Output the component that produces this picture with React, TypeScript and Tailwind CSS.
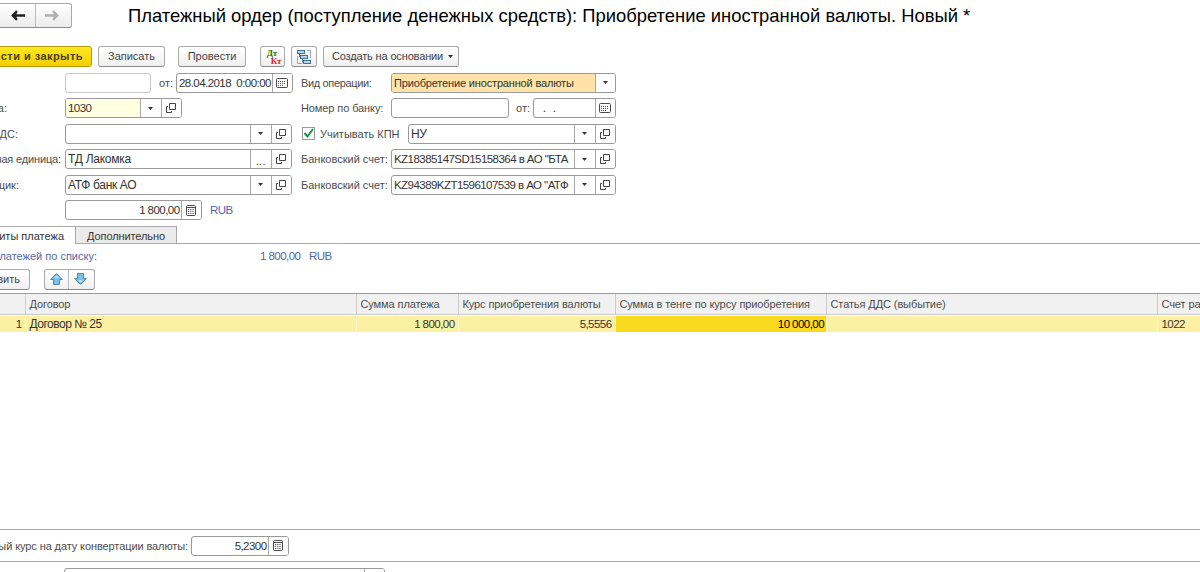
import type { ReactNode } from 'react';
import clsx from 'clsx';

const TABLE_COLUMNS = 'grid grid-cols-[26px_331px_102px_157px_211px_331px_minmax(0,1fr)]';
const VALUE_TEXT = 'text-[11.5px] tracking-[-0.55px]';

function Text({ className, children }: { className?: string; children: ReactNode }) {
  return <span className={clsx('block shrink-0 whitespace-pre', className)}>{children}</span>;
}

// Labels on the left edge run past the window, only their tail is visible
function CutLabel({ className, children }: { className: string; children: ReactNode }) {
  return (
    <span className="flex w-[65px] shrink-0">
      <span className={clsx('flex shrink-0 justify-end whitespace-pre', className)}>
        <span className="shrink-0">{children}</span>
      </span>
    </span>
  );
}

function DropIcon() {
  return (
    <svg width="5" height="3" viewBox="0 0 5 3" fill="#333">
      <path d="M0 0h5L2.5 3z" />
    </svg>
  );
}

function OpenIcon() {
  return (
    <svg width="10" height="10" viewBox="0 0 10 10" fill="none" stroke="#444">
      <path d="M3.5.5h6v6h-6z" />
      <path d="M2 3.5H.5v6h5V8" />
    </svg>
  );
}

function CalendarIcon() {
  return (
    <svg width="12" height="10" viewBox="0 0 12 10" fill="none" stroke="#4a4a4a">
      <rect x=".5" y=".5" width="11" height="9" rx="1" />
      <path d="M2 3.5h8M2 5.5h8M2 7.5h6" strokeDasharray="1 1" />
    </svg>
  );
}

function CalcIcon() {
  return (
    <svg width="10" height="11" viewBox="0 0 10 11" fill="none" stroke="#4a4a4a">
      <rect x=".5" y=".5" width="9" height="10" rx="1" />
      <path d="M1 2.5h8" />
      <path d="M2 4.5h6M2 6.5h6M2 8.5h6" strokeDasharray="1.2 1" />
    </svg>
  );
}

const icons = {
  drop: <DropIcon />,
  open: <OpenIcon />,
  calendar: <CalendarIcon />,
  calc: <CalcIcon />,
  dots: <span className="pt-1 text-[11px] leading-none tracking-[0.3px]">...</span>,
};

type FieldProps = {
  className: string;
  valueClass?: string;
  textClass?: string;
  buttons?: (keyof typeof icons)[];
  pale?: boolean;
  children?: ReactNode;
};

function Field({ className, valueClass, textClass = VALUE_TEXT, buttons = [], pale, children }: FieldProps) {
  return (
    <div
      className={clsx(
        'flex h-5 shrink-0 overflow-hidden rounded-[3px] border bg-white text-[#333]',
        pale ? 'border-[#c8c8c8]' : 'border-[#999]',
        className,
      )}
    >
      <div className={clsx('flex min-w-0 flex-1 items-center overflow-hidden whitespace-pre pl-[2px]', textClass, valueClass)}>
        {children}
      </div>
      {buttons.map((name) => (
        <div key={name} className="flex w-[20.5px] shrink-0 items-center justify-center border-l border-[#a8a8a8] bg-white">
          {icons[name]}
        </div>
      ))}
    </div>
  );
}

function Button({ className, children }: { className: string; children: ReactNode }) {
  return (
    <button
      className={clsx(
        'flex h-[21px] shrink-0 items-center justify-center rounded-[3px] border border-[#aaa] border-b-[#8c8c8c] bg-linear-to-b from-white to-[#f0f0f0] whitespace-pre text-[#444]',
        className,
      )}
    >
      {children}
    </button>
  );
}

function Arrow({ up }: { up?: boolean }) {
  return (
    <svg width="13" height="12" viewBox="0 0 13 12" className={up ? '' : 'rotate-180'}>
      <path d="M6.5.6 12.3 6.5H9.5v4.9h-6V6.5H.7z" fill="#7dc0ea" stroke="#4d86ab" strokeLinejoin="round" />
      <path d="M6.5 2.3 9 5H4z" fill="#b9e2fa" />
    </svg>
  );
}

function NavArrow({ forward }: { forward?: boolean }) {
  return (
    <svg width="14" height="11" viewBox="0 0 14 11" fill="none" strokeWidth="2.4" stroke={forward ? '#b0b0b0' : '#222'} className={forward ? 'rotate-180' : ''}>
      <path d="M14 5.5H2M6 1.2 1.8 5.5 6 9.8" />
      <path d="M5 3.5v4L3 5.5z" strokeWidth="1" fill={forward ? '#b0b0b0' : '#222'} />
    </svg>
  );
}

function Header() {
  return (
    <div className="flex h-[46px] items-start pt-[3px]">
      <div className="-ml-1 flex h-[25px] w-[76px] shrink-0 rounded-[3px] border border-[#aaa] border-b-[#8c8c8c] bg-linear-to-b from-white to-[#ececec]">
        <div className="flex w-[39px] items-center justify-center border-r border-[#bbb] pl-1">
          <NavArrow />
        </div>
        <div className="flex flex-1 items-center justify-center pr-1">
          <NavArrow forward />
        </div>
      </div>
      <h1 className="ml-14 whitespace-pre text-[18.4px] leading-[25px] text-black">
        Платежный ордер (поступление денежных средств): Приобретение иностранной валюты. Новый *
      </h1>
    </div>
  );
}

function CommandBar() {
  return (
    <div className="flex h-[26.5px] items-start">
      <div className="-ml-1 flex h-[21px] w-24 shrink-0 items-center justify-end rounded-[3px] border border-[#b79c10] bg-linear-to-b from-[#ffe71e] to-[#f3cf00] pr-[8px] font-bold tracking-[0.45px] whitespace-pre text-[#4a4210]">
        <span className="shrink-0">сти и закрыть</span>
      </div>
      <Button className="ml-1.5 w-[67px]">Записать</Button>
      <Button className="ml-[13px] w-[68px]">Провести</Button>
      <Button className="ml-[14px] w-[25px]">
        <span className="flex flex-col font-['Liberation_Serif'] text-[9px] leading-[8px] font-bold">
          <span className="-ml-px text-[#087a16]">Дт</span>
          <span className="-mr-1 ml-[3px] text-[#d81f26]">Кт</span>
        </span>
      </Button>
      <Button className="ml-1.5 w-[26px]">
        <svg width="16" height="16" viewBox="0 0 16 16" fill="#b7d7e8" stroke="#3f728f">
          <path d="M11 1.5h3.5V9M1.5 7v7.5H6" fill="none" stroke="#8fa9b9" />
          <rect x="1.5" y="1.5" width="7" height="3" />
          <rect x="4.5" y="6.5" width="7" height="3" />
          <rect x="7.5" y="11.5" width="7" height="3" />
          <path d="M3.5 5v3h1M6.5 10v3h1" fill="none" />
        </svg>
      </Button>
      <Button className="ml-1.5 w-[136px] gap-[5px] pl-[3px]">
        <span className="tracking-[-0.15px]">Создать на основании</span>
        <DropIcon />
      </Button>
    </div>
  );
}

function Row({ children }: { children: ReactNode }) {
  return <div className="flex h-[25.5px] items-start leading-5">{children}</div>;
}

function Form() {
  return (
    <div className="h-[153px] shrink-0">
      <Row>
        <Field pale className="ml-[65px] w-[86px]" />
        <Text className="ml-2 w-[17px]">от:</Text>
        <Field className="w-[117px]" buttons={['calendar']}>28.04.2018  0:00:00</Field>
        <Text className="ml-2 w-[90px] tracking-[-0.35px]">Вид операции:</Text>
        <Field
          className="w-[225px]"
          valueClass="bg-[#fde3a7]"
          textClass="text-[11px] tracking-[-0.16px]"
          buttons={['drop']}
        >
          Приобретение иностранной валюты
        </Field>
      </Row>
      <Row>
        <CutLabel className="w-[7px]">а:</CutLabel>
        <Field className="w-[117px]" valueClass="bg-[#ffffe1]" buttons={['drop', 'open']}>1030</Field>
        <Text className="ml-[119px] w-[90px] tracking-[-0.1px]">Номер по банку:</Text>
        <Field className="w-[118px]" />
        <Text className="ml-[7px] w-[17px]">от:</Text>
        <Field className="w-[83px]" textClass="text-[12px]" buttons={['calendar']}>{'  .  .'}</Field>
      </Row>
      <Row>
        <CutLabel className="w-[18px]">ДС:</CutLabel>
        <Field className="w-[227px]" buttons={['drop', 'open']} />
        <span className="mt-[3px] ml-2.5 flex h-[13px] w-[13px] shrink-0 items-center justify-center border border-[#999] bg-white">
          <svg width="11" height="11" viewBox="0 0 11 11" fill="none" stroke="#159447" strokeWidth="2">
            <path d="M1.5 5 4.5 8.5 10 1" />
          </svg>
        </span>
        <Text className="ml-[5px] w-[88px]">Учитывать КПН</Text>
        <Field className="w-[208px]" textClass="text-[12px] tracking-[-0.4px]" buttons={['drop', 'open']}>НУ</Field>
      </Row>
      <Row>
        <CutLabel className="w-[61px] tracking-[-0.15px]">ная единица:</CutLabel>
        <Field className="w-[227px]" textClass="text-[12px] tracking-[-0.25px]" buttons={['dots', 'open']}>ТД Лакомка</Field>
        <Text className="ml-[9px] w-[90px]">Банковский счет:</Text>
        <Field className="w-[225px]" buttons={['drop', 'open']}>KZ18385147SD15158364 в АО "БТА</Field>
      </Row>
      <Row>
        <CutLabel className="w-[19px]">щик:</CutLabel>
        <Field className="w-[227px]" textClass="text-[12px] tracking-[-0.35px]" buttons={['drop', 'open']}>АТФ банк АО</Field>
        <Text className="ml-[9px] w-[90px]">Банковский счет:</Text>
        <Field className="w-[225px]" buttons={['drop', 'open']}>KZ94389KZT1596107539 в АО "АТФ</Field>
      </Row>
      <Row>
        <Field className="ml-[65px] w-[137px]" valueClass="justify-end pr-[1px]" buttons={['calc']}>1 800,00</Field>
        <Text className={clsx(VALUE_TEXT, 'ml-2 text-[#5468a8]')}>RUB</Text>
      </Row>
    </div>
  );
}

function Tabs() {
  return (
    <div className="flex h-[18px] items-stretch border-b border-[#aaa] leading-[18px]">
      <div className="-mb-px flex w-[76px] shrink-0 justify-end border-t border-r border-[#aaa] bg-white pr-[11px] text-[#333]">
        <Text>иты платежа</Text>
      </div>
      <div className="flex w-[101px] justify-center border-t border-r border-[#aaa] bg-[#ebebeb] text-[#333]">
        <Text className="tracking-[-0.1px]">Дополнительно</Text>
      </div>
    </div>
  );
}

function Payments() {
  return (
    <>
      <div className="flex h-[25px] items-center pt-px text-[#5468a8]">
        <CutLabel className="w-[97px]">латежей по списку:</CutLabel>
        <Text className={clsx(VALUE_TEXT, 'ml-[195px] w-[49px]')}>1 800,00</Text>
        <Text className={VALUE_TEXT}>RUB</Text>
      </div>
      <div className="flex h-6">
        <Button className="-ml-1 w-[34px] justify-end! pr-[9px]">
          <span className="shrink-0">вить</span>
        </Button>
        <Button className="ml-3.5 w-[51px]">
          <span className="flex h-full flex-1 items-center justify-center border-r border-[#bbb]"><Arrow up /></span>
          <span className="flex h-full flex-1 items-center justify-center pr-0.5"><Arrow /></span>
        </Button>
      </div>
    </>
  );
}

function PaymentsTable() {
  const headers = ['', 'Договор', 'Сумма платежа', 'Курс приобретения валюты', 'Сумма в тенге по курсу приобретения', 'Статья ДДС (выбытие)', 'Счет рас'];
  const cells = ['1', 'Договор № 25', '1 800,00', '5,5556', '10 000,00', '', '1022'];
  const numeric = [0, 2, 3, 4];

  return (
    <div className="h-[236px] border-t border-[#999]">
      <div className={clsx(TABLE_COLUMNS, 'h-[21px] border-b border-[#ccc] bg-[#f1f1f1] leading-5 tracking-[-0.1px]')}>
        {headers.map((title, i) => (
          <div key={i} className="border-r border-[#ccc] pl-[3.5px] whitespace-pre last:border-r-0">{title}</div>
        ))}
      </div>
      <div className={clsx(TABLE_COLUMNS, 'mt-px h-4 leading-[17px] text-[#333]')}>
        {cells.map((value, i) => (
          <div
            key={i}
            className={clsx(
              'overflow-hidden border-r border-[#fff7cf] whitespace-pre last:border-r-0',
              i === 4 ? 'bg-[#fada1e] pr-[2px] text-black' : 'bg-[#fcf0a3] px-[3.5px]',
              i === 1 ? 'text-[12px] tracking-[-0.5px]' : VALUE_TEXT,
              numeric.includes(i) && 'text-right',
            )}
          >
            {value}
          </div>
        ))}
      </div>
    </div>
  );
}

function Footer() {
  return (
    <>
      <div className="flex h-[33px] items-start border-y border-[#aaa] pt-1.5 leading-5">
        <span className="flex w-[188px] shrink-0 justify-end tracking-[-0.1px]">
          <Text>ый курс на дату конвертации валюты:</Text>
        </span>
        <Field className="ml-[3px] w-[98px]" valueClass="justify-end pr-[1px]" buttons={['calc']}>5,2300</Field>
      </div>
      <div className="pt-1.5">
        <Field className="ml-16 w-[321px]" buttons={['drop']} />
      </div>
    </>
  );
}

export default function App() {
  return (
    <div className="flex h-[572px] w-[1200px] flex-col overflow-hidden bg-white font-['Liberation_Sans',sans-serif] text-[11px] text-[#4d4d4d] *:shrink-0">
      <Header />
      <CommandBar />
      <Form />
      <Tabs />
      <Payments />
      <PaymentsTable />
      <Footer />
    </div>
  );
}
